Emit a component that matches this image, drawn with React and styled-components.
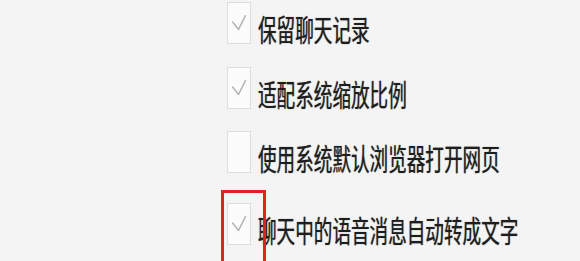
import React from "react";
import styled, { createGlobalStyle } from "styled-components";

const GlobalStyle = createGlobalStyle`
  html, body {
    margin: 0;
    padding: 0;
    background: #f4f4f4;
  }
  body {
    font-family: "Noto Sans CJK SC", "Noto Sans", sans-serif;
  }
`;

const Page = styled.div`
  width: 580px;
  height: 261px;
  overflow: hidden;
  background: #f4f4f4;
  padding-left: 227px;
  box-sizing: border-box;
`;

const List = styled.div`
  display: flex;
  flex-direction: column;
`;

const Row = styled.div`
  position: relative;
  display: flex;
  align-items: center;
  gap: 7px;
  margin-top: ${(p) => p.$top}px;
`;

const Box = styled.div`
  width: 24px;
  height: 42px;
  box-sizing: border-box;
  border: 1.5px solid #dcdcdc;
  background: #fbfbfb;
  display: flex;
  align-items: center;
  justify-content: center;
  flex-shrink: 0;
`;

const Label = styled.span`
  display: inline-block;
  font-size: 18.6px;
  line-height: 1;
  color: #1e1e1e;
  text-shadow: 0 0 0.8px rgba(0, 0, 0, 0.6);
  white-space: nowrap;
  transform: translateY(5px) scaleY(1.6);
  transform-origin: center;
`;

const Highlight = styled.div`
  position: absolute;
  left: -6px;
  top: -13px;
  width: 45px;
  height: 80px;
  box-sizing: border-box;
  border: 3px solid #e3221f;
  border-bottom: none;
  pointer-events: none;
`;

const Check = () => (
  <svg width="24" height="42" viewBox="0 0 24 42">
    <polyline
      points="5,20 11.5,28 19,13"
      fill="none"
      stroke="#b3b3b3"
      strokeWidth="1.6"
      strokeLinecap="round"
      strokeLinejoin="round"
    />
  </svg>
);

const Option = ({ label, checked, top, marked }) => (
  <Row $top={top}>
    <Box>{checked && <Check />}</Box>
    <Label>{label}</Label>
    {marked && <Highlight />}
  </Row>
);

export default function App() {
  return (
    <>
      <GlobalStyle />
      <Page>
        <List>
          <Option top={2} checked label="保留聊天记录" />
          <Option top={23} checked label="适配系统缩放比例" />
          <Option top={22} label="使用系统默认浏览器打开网页" />
          <Option top={30} checked marked label="聊天中的语音消息自动转成文字" />
        </List>
      </Page>
    </>
  );
}
